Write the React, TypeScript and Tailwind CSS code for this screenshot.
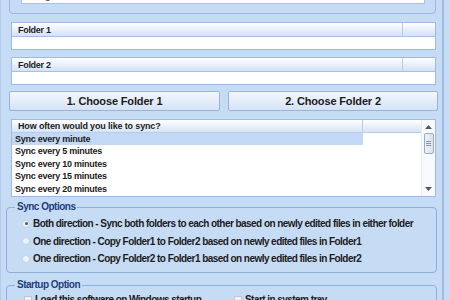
import React from 'react';

const FolderField = ({ label, className }: { label: string; className: string }) => {
  return (
    <div className={`shrink-0 ml-[10px] w-[425px] border border-[#9dbbe2] bg-white ${className}`}>
      <div className="h-[14px] flex border-b border-[#a6c1e5] bg-linear-to-b from-[#ffffff] to-[#d3e2f6]">
        <div className="w-[391px] border-r border-[#b7cce9] pl-[6px] text-[9px] font-bold leading-[14px] tracking-[-0.3px] text-[#1c1c1c]">
          {label}
        </div>
      </div>
      <div className="h-[12px]" />
    </div>
  );
};

const Radio = ({ checked, label }: { checked?: boolean; label: string }) => {
  return (
    <div className="flex items-center h-[17.5px]">
      <div className="ml-[15px] w-[8px] h-[8px] rounded-full border border-[#c3d2e4] bg-[#eef3f9] flex items-center justify-center">
        {checked && <div className="w-[3px] h-[3px] rounded-full bg-[#4a5868]" />}
      </div>
      <span className="ml-[3px] text-[10px] font-bold tracking-[-0.55px] text-[#1c1c1c]">{label}</span>
    </div>
  );
};

const rows = ['Sync every minute', 'Sync every 5 minutes', 'Sync every 10 minutes', 'Sync every 15 minutes', 'Sync every 20 minutes'];

export default function App() {
  return (
    <div className="w-[450px] h-[300px] overflow-hidden bg-[#c6dbf4] font-['Liberation_Sans',Arial,sans-serif]">
      <div className="w-[444px] h-[300px] border-l border-r-2 border-l-[#b3cbea] border-r-[#9fbbe0] flex flex-col">
        {/* top group with progress box, cut by the frame */}
        <div className="shrink-0 -mt-[22px] ml-[8px] w-[427px] h-[36px] border border-[#9ab8df] rounded-[4px] pt-[6px]">
          <div className="ml-[11px] w-[404px] h-[19px] border border-[#a8c1e2] bg-white pl-[8px] text-[9px] font-bold leading-[20px] text-[#555]">
            Progress Bar
          </div>
        </div>

        <FolderField label="Folder 1" className="mt-[8px]" />
        <FolderField label="Folder 2" className="mt-[7px]" />

        <div className="shrink-0 mt-[6px] ml-[8px] flex gap-[8px]">
          <button className="w-[211px] h-[20px] rounded-[2px] border border-[#98b4d9] bg-linear-to-b from-[#f3f7fd] to-[#d5e3f5] text-[11px] font-bold tracking-[-0.15px] text-[#1c1c1c]">
            1. Choose Folder 1
          </button>
          <button className="w-[210px] h-[20px] rounded-[2px] border border-[#98b4d9] bg-linear-to-b from-[#f3f7fd] to-[#d5e3f5] text-[11px] font-bold tracking-[-0.15px] text-[#1c1c1c]">
            2. Choose Folder 2
          </button>
        </div>

        <div className="shrink-0 mt-[8px] ml-[10px] w-[425px] h-[78px] border border-[#9dbbe2] bg-white flex">
          <div className="flex-1 flex flex-col">
            <div className="h-[13px] flex border-b border-[#b8cde9] bg-linear-to-b from-[#ffffff] to-[#d6e4f6]">
              <div className="w-[351px] border-r border-[#b7cce9] pl-[6px] text-[9px] font-bold leading-[12px] tracking-[-0.15px] text-[#1c1c1c]">
                How often would you like to sync?
              </div>
            </div>
            {rows.map((r, i) => (
              <div key={r} className={`h-[12.4px] w-[351px] pl-[3px] text-[9px] font-bold leading-[12.4px] tracking-[-0.25px] text-[#1c1c1c] ${i === 0 ? 'bg-[#c3d8f4]' : ''}`}>
                {r}
              </div>
            ))}
          </div>
          <div className="w-[14px] flex flex-col items-center border-l border-[#e3ebf5] bg-[#f7f9fc]">
            <svg width="7" height="4" viewBox="0 0 7 4" className="mt-[5px]">
              <path d="M0 4 L3.5 0 L7 4 Z" fill="#4d5a6a" />
            </svg>
            <div className="mt-[4px] w-[10px] h-[21px] rounded-[2px] border border-[#9aabbf] bg-linear-to-r from-[#eef2f7] to-[#d9e1ea] flex flex-col items-center justify-center gap-[1px]">
              <div className="w-[5px] h-px bg-[#8696a8]" />
              <div className="w-[5px] h-px bg-[#8696a8]" />
              <div className="w-[5px] h-px bg-[#8696a8]" />
            </div>
            <div className="flex-1" />
            <svg width="7" height="4" viewBox="0 0 7 4" className="mb-[5px]">
              <path d="M0 0 L3.5 4 L7 0 Z" fill="#4d5a6a" />
            </svg>
          </div>
        </div>

        <fieldset className="shrink-0 mt-[4px] ml-[5px] w-[431px] h-[72px] border border-[#8fb0dc] rounded-[4px] pt-[2px]">
          <legend className="ml-[8px] px-[2px] text-[10px] font-bold tracking-[-0.5px] text-[#1f3f7c] leading-[12px]">Sync Options</legend>
          <Radio checked label="Both direction - Sync both folders to each other based on newly edited files in either folder" />
          <Radio label="One direction - Copy Folder1 to Folder2 based on newly edited files in Folder1" />
          <Radio label="One direction - Copy Folder2 to Folder1 based on newly edited files in Folder2" />
        </fieldset>

        <fieldset className="shrink-0 mt-[6px] ml-[5px] w-[431px] h-[40px] border border-[#8fb0dc] rounded-[4px] pt-[1px]">
          <legend className="ml-[8px] px-[2px] text-[10px] font-bold tracking-[-0.5px] text-[#1f3f7c] leading-[12px]">Startup Option</legend>
          <div className="flex items-center">
            <div className="w-[227px] flex items-center">
              <div className="ml-[17px] w-[8px] h-[8px] border border-[#b9c8da] bg-[#eef2f7]" />
              <span className="ml-[3px] text-[10px] font-bold tracking-[-0.55px] text-[#1c1c1c]">Load this software on Windows startup</span>
            </div>
            <div className="w-[8px] h-[8px] border border-[#b9c8da] bg-[#eef2f7]" />
            <span className="ml-[3px] text-[10px] font-bold tracking-[-0.55px] text-[#1c1c1c]">Start in system tray</span>
          </div>
        </fieldset>
      </div>
    </div>
  );
}
